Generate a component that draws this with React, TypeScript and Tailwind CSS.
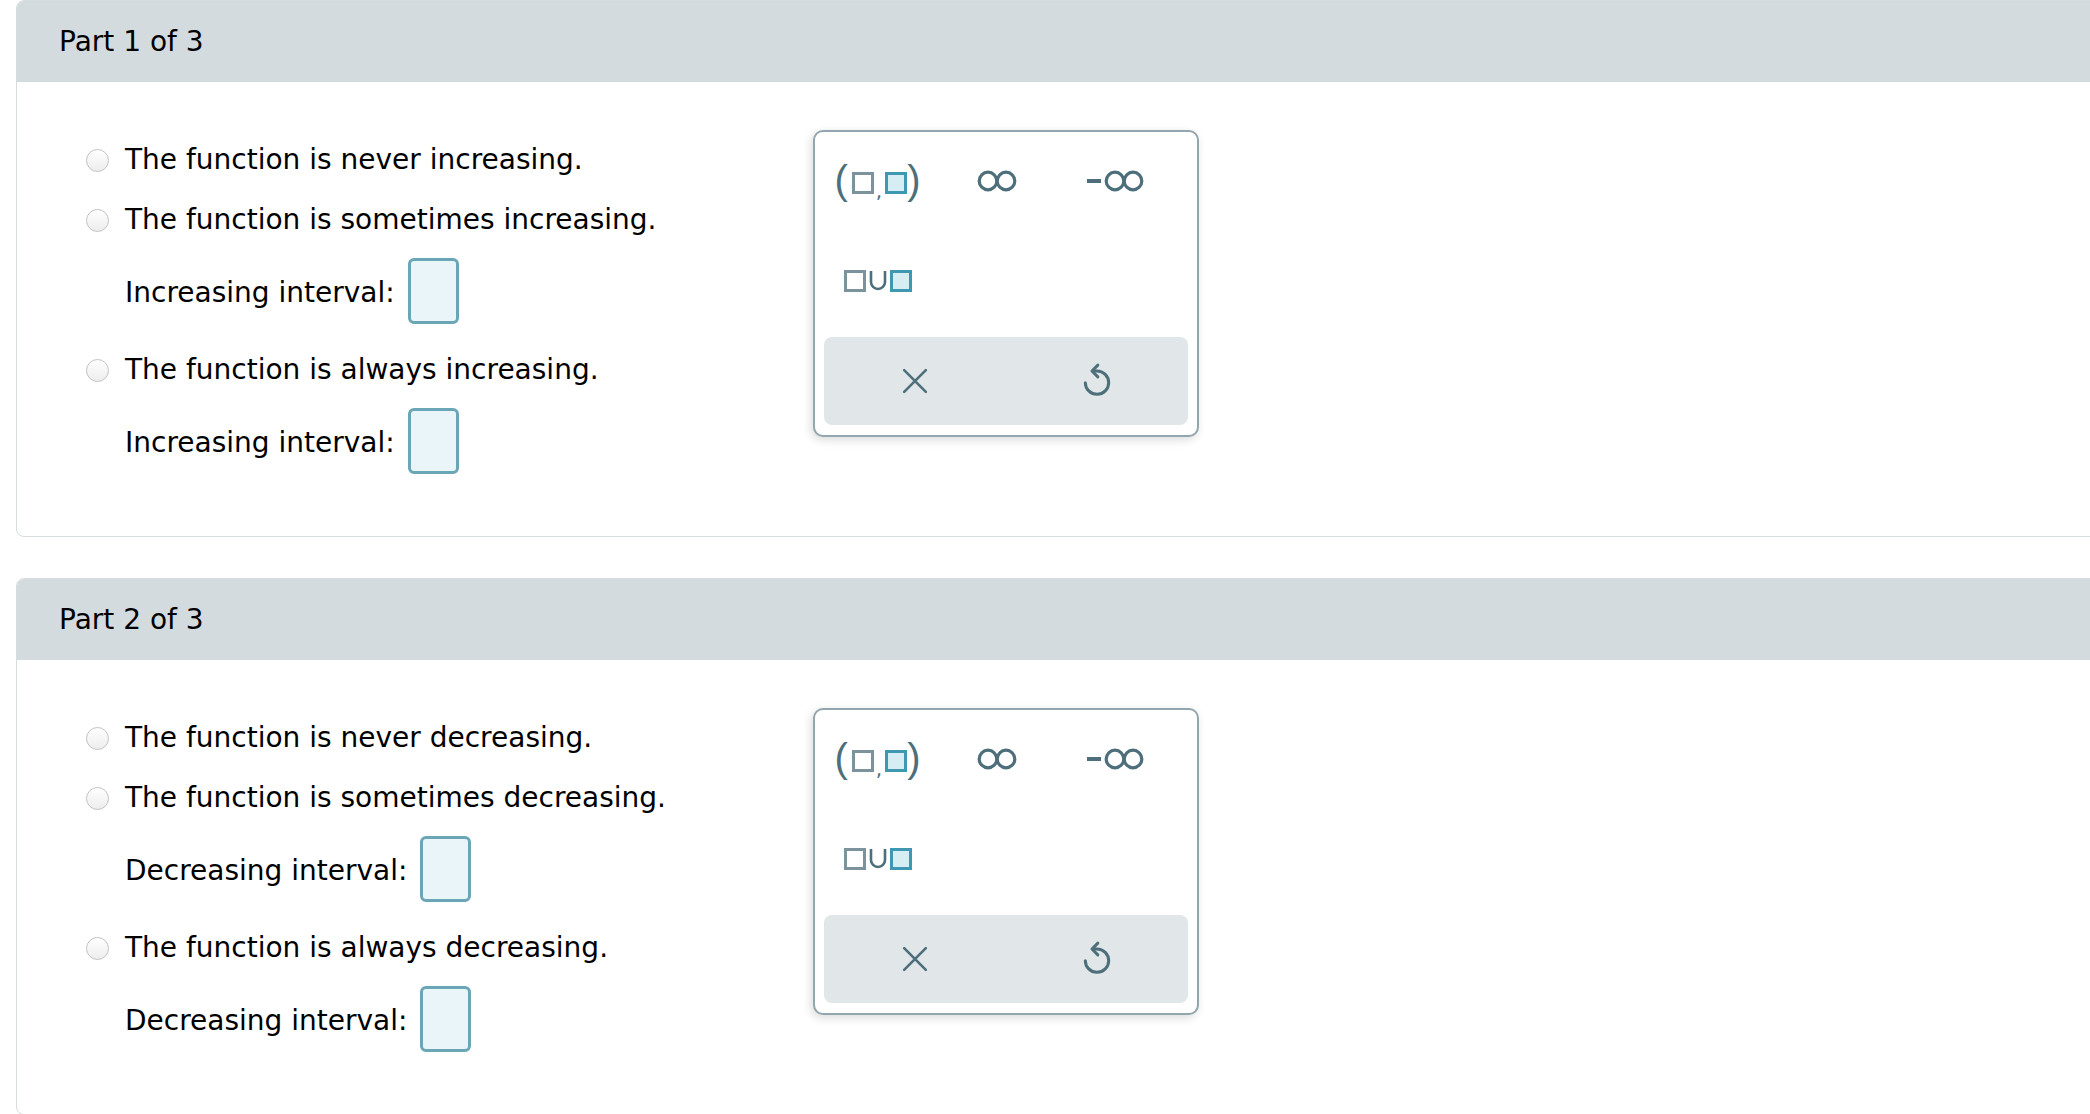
import React from 'react';

const font = { fontFamily: '"DejaVu Sans", Verdana, sans-serif' };
const parenFont = { fontFamily: '"Liberation Sans", Arial, sans-serif' };

const Radio: React.FC = () => (
  <span className="inline-block h-[23px] w-[23px] shrink-0 rounded-full border border-[#c2c2c2] bg-gradient-to-b from-white to-[#ededed]" />
);

const AnswerBox: React.FC = () => (
  <span className="inline-block h-[66px] w-[51px] rounded-[6px] border-[3px] border-[#6aa6b5] bg-[#eaf5fa]" />
);

const GraySquare: React.FC = () => (
  <span className="inline-block h-[22px] w-[22px] border-[3px] border-[#7c939d]" />
);

const BlueSquare: React.FC = () => (
  <span className="inline-block h-[22px] w-[22px] border-[3px] border-[#3f98b2] bg-[#d5edf3]" />
);

const Infinity: React.FC = () => (
  <svg width="40" height="22" viewBox="0 0 40 22" fill="none" stroke="#4d6f7b" strokeWidth="3.2">
    <circle cx="11" cy="11" r="8.8" />
    <circle cx="29" cy="11" r="8.8" />
  </svg>
);

const Keypad: React.FC = () => (
  <div className="mt-[48px] flex h-[307px] w-[386px] shrink-0 flex-col rounded-[10px] border-2 border-[#93a5ad] bg-white shadow-[-2px_3px_10px_rgba(0,0,0,0.14)]">
    <div className="mt-[23px] flex h-[52px] pl-[3px]">
      <div className="flex w-[119px] items-center justify-center text-[#4d6f7b]">
        <span className="relative top-[-1px] text-[40px] leading-none" style={parenFont}>(</span>
        <span className="ml-[4px] mt-[4px] flex"><GraySquare /></span>
        <span className="ml-[2px] mt-[20px] text-[20px] leading-none">,</span>
        <span className="ml-[3px] mt-[4px] flex"><BlueSquare /></span>
        <span className="relative top-[-1px] text-[40px] leading-none" style={parenFont}>)</span>
      </div>
      <div className="flex w-[119px] items-center justify-center">
        <Infinity />
      </div>
      <div className="flex w-[119px] items-center justify-center">
        <span className="mr-[3px] inline-block h-[4px] w-[14px] bg-[#4d6f7b]" />
        <Infinity />
      </div>
    </div>
    <div className="mt-[48px] flex h-[52px] pl-[3px]">
      <div className="flex w-[119px] items-center justify-center">
        <GraySquare />
        <svg width="20" height="22" viewBox="0 0 20 22" fill="none" stroke="#4d6f7b" strokeWidth="2.6" className="mx-[2px]">
          <path d="M3 1v11a7 7 0 0 0 14 0V1" />
        </svg>
        <BlueSquare />
      </div>
    </div>
    <div className="mx-[9px] mt-[30px] flex h-[88px] rounded-[8px] bg-[#e1e6e8]">
      <div className="flex flex-1 items-center justify-center">
        <svg width="26" height="26" viewBox="0 0 24 24" fill="none" stroke="#4d6f7b" strokeWidth="2.4" strokeLinecap="round">
          <path d="M2 2l20 20M22 2L2 22" />
        </svg>
      </div>
      <div className="flex flex-1 items-center justify-center">
        <svg width="40" height="40" viewBox="0 0 24 24" fill="none" stroke="#4d6f7b" strokeWidth="1.8" strokeLinecap="round" strokeLinejoin="round">
          <path d="M9.5 6H12a7 7 0 1 1-7 7" />
          <path d="M12.5 2.5L9 6l3.5 3.5" />
        </svg>
      </div>
    </div>
  </div>
);

type PartProps = { part: number; word: string };

const Part: React.FC<PartProps> = ({ part, word }) => {
  const label = word === 'increasing' ? 'Increasing interval:' : 'Decreasing interval:';
  return (
    <div className="w-[2100px] overflow-hidden rounded-[8px] border border-[#d6dde1]">
      <div className="flex h-[81px] items-center bg-[#d3dbdf] pl-[42px] text-[28px] text-black">
        Part {part} of 3
      </div>
      <div className="flex">
        <div className="w-[796px] shrink-0 pb-[62px] pl-[69px] pt-[56px] text-[28px] text-black">
          <div className="flex h-[44px] items-center gap-[16px]">
            <Radio />
            <span>The function is never {word}.</span>
          </div>
          <div className="mt-[16px] flex h-[44px] items-center gap-[16px]">
            <Radio />
            <span>The function is sometimes {word}.</span>
          </div>
          <div className="mt-[16px] flex items-center gap-[13px] pl-[39px]">
            <span className="pt-[3px]">{label}</span>
            <AnswerBox />
          </div>
          <div className="mt-[24px] flex h-[44px] items-center gap-[16px]">
            <Radio />
            <span>The function is always {word}.</span>
          </div>
          <div className="mt-[16px] flex items-center gap-[13px] pl-[39px]">
            <span className="pt-[3px]">{label}</span>
            <AnswerBox />
          </div>
        </div>
        <Keypad />
      </div>
    </div>
  );
};

export default function App() {
  return (
    <div className="h-[1114px] w-full overflow-hidden bg-white" style={font}>
      <div className="flex flex-col gap-[41px] pl-4">
        <Part part={1} word="increasing" />
        <Part part={2} word="decreasing" />
      </div>
    </div>
  );
}
